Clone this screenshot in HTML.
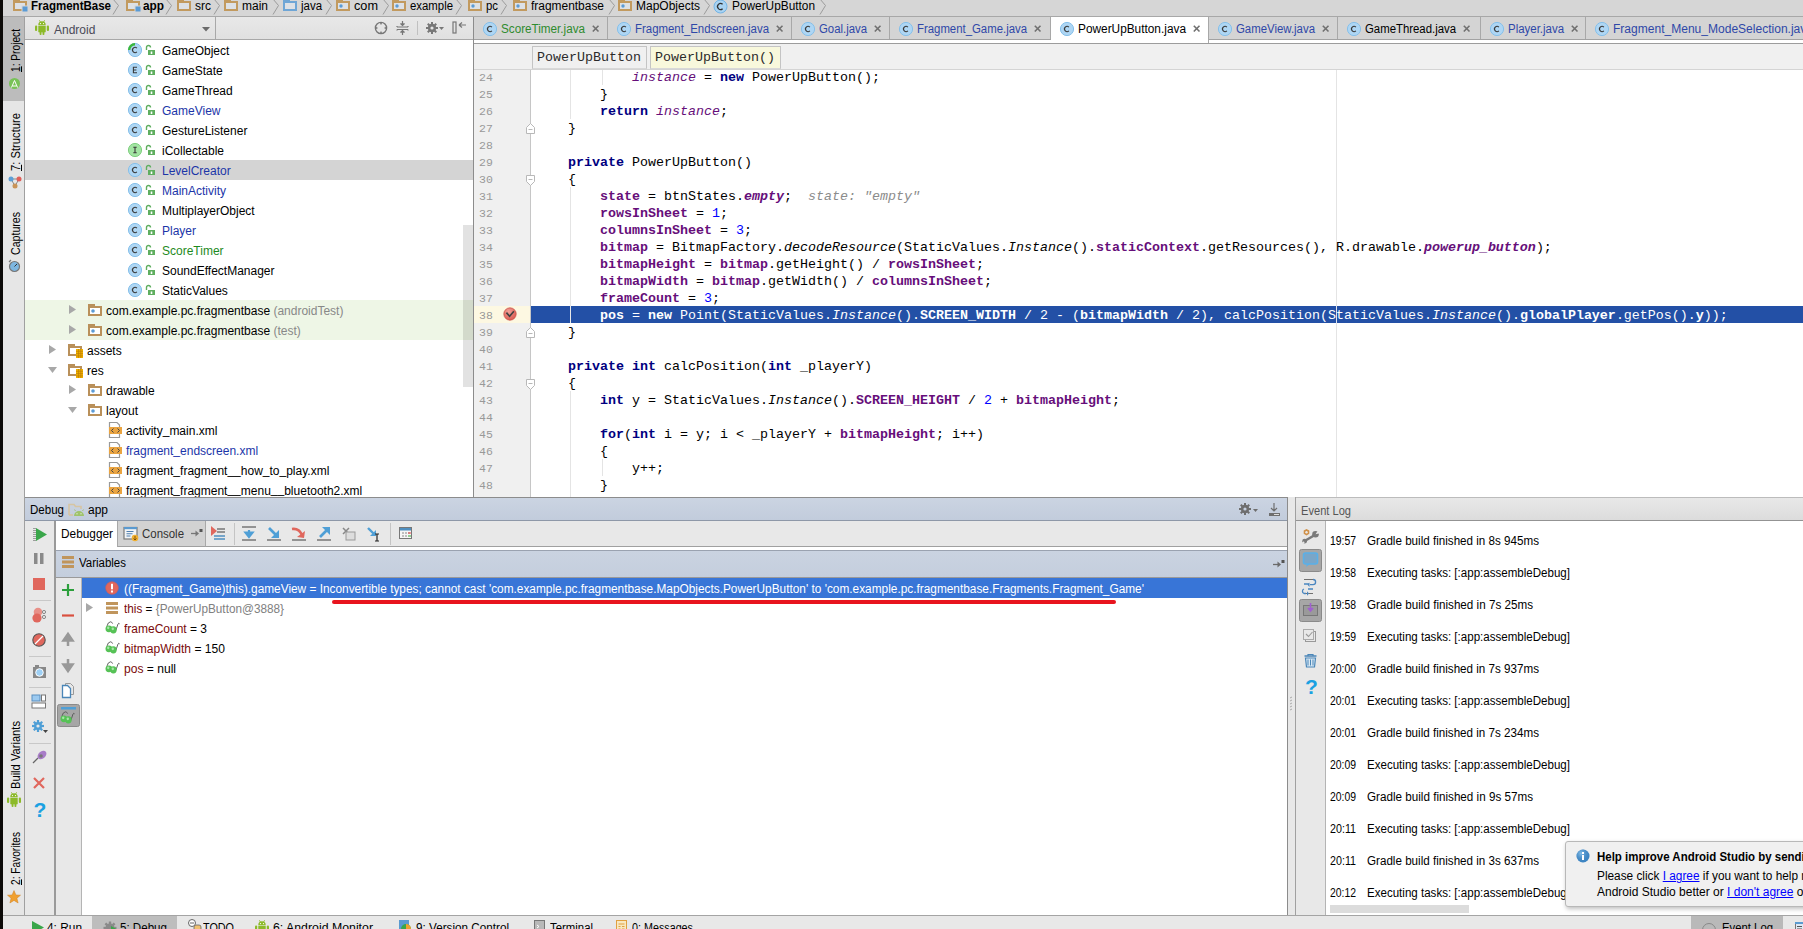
<!DOCTYPE html><html><head><meta charset="utf-8"><style>*{margin:0;padding:0;box-sizing:border-box}
html,body{width:1803px;height:929px;overflow:hidden;background:#e8e8e8;font-family:"Liberation Sans",sans-serif;font-size:12px;color:#000;position:relative}
.a{position:absolute}
.nw{white-space:nowrap}
svg.a{overflow:visible}
#bc{left:3px;top:0;width:1800px;height:17px;background:#d6d6d6;border-bottom:1px solid #a8a8a8}
#ls{left:3px;top:17px;width:22px;height:898px;background:#e6e6e6;border-right:1px solid #a0a0a0}
.vt{position:absolute;transform:rotate(-90deg);transform-origin:0 0;white-space:nowrap;font-size:12px}
#proj{left:25px;top:17px;width:448px;height:480px;background:#fff}
#projh{left:0;top:0;width:448px;height:23px;background:linear-gradient(#e8e8e8,#e0e0e0);border-bottom:1px solid #a8a8a8}
.row{position:absolute;height:20px;line-height:20px;white-space:nowrap}
#ed{left:473px;top:17px;width:1330px;height:480px;background:#fff;border-left:1px solid #8c8c8c}
#tabs{left:0;top:0;width:1330px;height:23px;background:#d4d4d4;border-bottom:1px solid #a0a0a0}
.tab{position:absolute;top:0;height:23px;border-right:1px solid #a6a6a6;line-height:22px;white-space:nowrap;color:#2040a0}
#nav{left:0;top:26px;width:1330px;height:27px;background:#f0f0f0;border-top:1px solid #a0a0a0;border-bottom:1px solid #d8d8d8}
#gut{left:0;top:53px;width:57px;height:427px;background:#f0f0f0;border-right:1px solid #c8c8c8}
.ln{position:absolute;color:#999;font-family:"Liberation Mono",monospace;font-size:11.5px;line-height:17px;white-space:pre}
.cl{position:absolute;height:17px;line-height:17px;white-space:pre;font-family:"Liberation Mono",monospace;font-size:13.333px;color:#000}
.k{color:#000080;font-weight:bold}
.f{color:#660e7a;font-weight:bold}
.s{color:#660e7a;font-style:italic}
.sb{color:#660e7a;font-weight:bold;font-style:italic}
.n{color:#0000ff}
.it{font-style:italic}
#dbg{left:25px;top:497px;width:1263px;height:416px;background:#fff}
#dbgh{left:0;top:0;width:1263px;height:24px;background:linear-gradient(#cdd5e2,#c3cddd);border-top:1px solid #8f8f8f;border-bottom:1px solid #8f99a8}
#ev{left:1295px;top:497px;width:508px;height:416px;background:#fff;border-left:1px solid #a0a0a0}
#evh{left:0;top:0;width:508px;height:24px;background:linear-gradient(#e8e8e8,#e0e0e0);border-top:1px solid #a0a0a0;border-bottom:1px solid #a0a0a0}
#bot{left:3px;top:913px;width:1800px;height:16px;background:#e6e6e6;border-top:1px solid #a8a8a8}
.mono{font-family:"Liberation Mono",monospace;font-size:13.333px}
.hint{color:#8c8c8c;font-style:italic}
#code b{font-weight:bold}
</style></head><body>
<svg width="0" height="0" style="position:absolute"><defs>
<symbol id="i-fold" overflow="visible"><path d="M0,-1H7V1H14V11H0Z" fill="#c29a5f"/><rect x="2" y="3" width="10" height="6" fill="#dde1e6"/></symbol>
<symbol id="i-jfold" overflow="visible"><path d="M0,-1H7V1H14V11H0Z" fill="#6fa6d6"/><rect x="2" y="3" width="10" height="6" fill="#dde1e6"/></symbol>
<symbol id="i-pkg" overflow="visible"><path d="M0,-1H7V1H14V11H0Z" fill="#c29a5f"/><rect x="2" y="3" width="10" height="6" fill="#dde1e6"/><circle cx="5" cy="6" r="1.7" fill="#5b9bd5"/></symbol>
<symbol id="i-mod" overflow="visible"><path d="M1,-1H8V1H15V11H1Z" fill="#c29a5f"/><rect x="3" y="3" width="10" height="6" fill="#dde1e6"/><rect x="10" y="6" width="6" height="6" fill="#5b9bd5" stroke="#d6d6d6" stroke-width="1"/></symbol>
<symbol id="i-cls" overflow="visible"><circle cx="7.5" cy="7.5" r="6.5" fill="#a9d3f2" stroke="#72b4e6" stroke-width="1"/><path d="M9.6,5.3 A3,3 0 1 0 9.6,9.7" fill="none" stroke="#333" stroke-width="1.3"/></symbol>
<symbol id="i-tc" overflow="visible"><circle cx="8" cy="8" r="6.6" fill="#aed6f4" stroke="#86c0ea" stroke-width="1"/><path d="M9.9,6.1 A2.6,2.6 0 1 0 9.9,9.9" fill="none" stroke="#3a3a3a" stroke-width="1.15"/></symbol>
<symbol id="i-tc2" overflow="visible"><circle cx="8" cy="8" r="6.6" fill="#aed6f4" stroke="#86c0ea" stroke-width="1"/><path d="M8,8 V0.9 A7.1,7.1 0 0 0 0.9,8 Z" fill="#3cb83c"/><circle cx="8" cy="8" r="4.6" fill="#aed6f4"/><path d="M9.9,6.1 A2.6,2.6 0 1 0 9.9,9.9" fill="none" stroke="#3a3a3a" stroke-width="1.15"/></symbol>
<symbol id="i-te" overflow="visible"><circle cx="8" cy="8" r="6.6" fill="#aed6f4" stroke="#86c0ea" stroke-width="1"/><path d="M10,5.3 H6.4 V10.7 H10 M6.4,8 H9.4" fill="none" stroke="#3a3a3a" stroke-width="1.1"/></symbol>
<symbol id="i-ti" overflow="visible"><circle cx="8" cy="8" r="6.6" fill="#a2e4a2" stroke="#7fcf7f" stroke-width="1"/><path d="M6.3,5.3 H9.7 M6.3,10.7 H9.7 M8,5.3 V10.7" fill="none" stroke="#3a3a3a" stroke-width="1.1"/></symbol>
<symbol id="i-lock" overflow="visible"><path d="M1.5,5 V2.5 A2,2 0 0 1 5.5,2.5" fill="none" stroke="#5fae5f" stroke-width="1.4"/><rect x="3" y="5" width="7" height="5" fill="#5fae5f"/><rect x="5.7" y="6.5" width="1.6" height="2.5" fill="#fff"/></symbol>
<symbol id="i-pkgt" overflow="visible"><path d="M0,0H7V2H14V12H0Z" fill="#b9905a"/><rect x="2" y="4" width="10" height="6" fill="#fff"/><circle cx="5" cy="7" r="1.8" fill="#5b9bd5"/></symbol>
<symbol id="i-resf" overflow="visible"><path d="M0,0H7V2H14V12H0Z" fill="#b9905a"/><rect x="2" y="4" width="10" height="6" fill="#fff"/><rect x="8" y="5" width="7" height="9" fill="#f0b000"/><path d="M8,7.3h7M8,9.6h7M8,11.9h7M10.5,5v9M12.8,5v9" stroke="#c08000" stroke-width="0.7"/></symbol>
<symbol id="i-xml" overflow="visible"><path d="M1.5,0.5 H9 L11.5,3 V15.5 H1.5 Z" fill="#fff" stroke="#999" stroke-width="1.2"/><rect x="1" y="5" width="13" height="7" fill="#eaa441"/><path d="M5.5,6.5 L3.5,8.5 L5.5,10.5 M9.5,6.5 L11.5,8.5 L9.5,10.5" fill="none" stroke="#444" stroke-width="1"/></symbol>
<symbol id="i-android" overflow="visible"><g fill="#8cba28"><rect x="0" y="5.5" width="2.2" height="5.5" rx="1"/><rect x="3.3" y="5.6" width="7.4" height="6.6"/><rect x="11.8" y="5.5" width="2.2" height="5.5" rx="1"/><path d="M3.3,5 A3.7,3.7 0 0 1 10.7,5 Z"/><rect x="4.6" y="11.5" width="1.9" height="3.5" rx="0.8"/><rect x="7.5" y="11.5" width="1.9" height="3.5" rx="0.8"/></g><path d="M4.4,0.3 L5.5,2.2 M9.6,0.3 L8.5,2.2" stroke="#8cba28" stroke-width="0.9"/><circle cx="5.5" cy="3.6" r="0.6" fill="#fff"/><circle cx="8.5" cy="3.6" r="0.6" fill="#fff"/></symbol>
<radialGradient id="g-info" cx="0.35" cy="0.3" r="0.8"><stop offset="0" stop-color="#8cc4ec" stop-opacity="0.9"/><stop offset="1" stop-color="#2a70b0" stop-opacity="0"/></radialGradient>
<symbol id="i-glasses" overflow="visible"><path d="M1.8,5.5 Q3,0.8 5.5,0.8 Q7,0.9 7.6,2.6 M10.8,9.5 L13,3 Q13.7,1.6 14.6,2.8" stroke="#555" stroke-width="0.9" fill="none"/><ellipse cx="3.9" cy="7.8" rx="3.4" ry="3.4" fill="#56c256"/><ellipse cx="8.4" cy="8.8" rx="3.3" ry="3.6" fill="#56c256"/><ellipse cx="3.2" cy="6.8" rx="1.2" ry="1.4" fill="#a8e6a8"/><ellipse cx="7.8" cy="7.8" rx="1.2" ry="1.4" fill="#a8e6a8"/></symbol>
</defs></svg>

<div class="a" style="left:0;top:0;width:3px;height:929px;background:#0c0a08"></div>
<div id="bc" class="a"></div>
<svg class="a" style="left:12px;top:0" width="16" height="13"><use href="#i-mod"/></svg>
<div class="a nw" style="left:31px;top:-2px;line-height:16px;font-weight:bold;transform-origin:0 0;transform:scaleX(0.9595)">FragmentBase</div>
<svg class="a" style="left:112px;top:0" width="10" height="17"><path d="M1,-1 L6.5,5.5 L1,14.5" fill="none" stroke="#9c9c9c" stroke-width="1"/></svg>
<svg class="a" style="left:125px;top:0" width="16" height="13"><use href="#i-mod"/></svg>
<div class="a nw" style="left:143px;top:-2px;line-height:16px;font-weight:bold;transform-origin:0 0;transform:scaleX(0.9839)">app</div>
<svg class="a" style="left:165px;top:0" width="10" height="17"><path d="M1,-1 L6.5,5.5 L1,14.5" fill="none" stroke="#9c9c9c" stroke-width="1"/></svg>
<svg class="a" style="left:177px;top:0" width="16" height="13"><use href="#i-fold"/></svg>
<div class="a nw" style="left:195px;top:-2px;line-height:16px;transform-origin:0 0;transform:scaleX(1.0000)">src</div>
<svg class="a" style="left:213px;top:0" width="10" height="17"><path d="M1,-1 L6.5,5.5 L1,14.5" fill="none" stroke="#9c9c9c" stroke-width="1"/></svg>
<svg class="a" style="left:224px;top:0" width="16" height="13"><use href="#i-fold"/></svg>
<div class="a nw" style="left:242px;top:-2px;line-height:16px;transform-origin:0 0;transform:scaleX(0.9994)">main</div>
<svg class="a" style="left:272px;top:0" width="10" height="17"><path d="M1,-1 L6.5,5.5 L1,14.5" fill="none" stroke="#9c9c9c" stroke-width="1"/></svg>
<svg class="a" style="left:283px;top:0" width="16" height="13"><use href="#i-jfold"/></svg>
<div class="a nw" style="left:301px;top:-2px;line-height:16px;transform-origin:0 0;transform:scaleX(0.9539)">java</div>
<svg class="a" style="left:325px;top:0" width="10" height="17"><path d="M1,-1 L6.5,5.5 L1,14.5" fill="none" stroke="#9c9c9c" stroke-width="1"/></svg>
<svg class="a" style="left:336px;top:0" width="16" height="13"><use href="#i-pkg"/></svg>
<div class="a nw" style="left:354px;top:-2px;line-height:16px;transform-origin:0 0;transform:scaleX(1.0586)">com</div>
<svg class="a" style="left:382px;top:0" width="10" height="17"><path d="M1,-1 L6.5,5.5 L1,14.5" fill="none" stroke="#9c9c9c" stroke-width="1"/></svg>
<svg class="a" style="left:392px;top:0" width="16" height="13"><use href="#i-pkg"/></svg>
<div class="a nw" style="left:410px;top:-2px;line-height:16px;transform-origin:0 0;transform:scaleX(0.9480)">example</div>
<svg class="a" style="left:455px;top:0" width="10" height="17"><path d="M1,-1 L6.5,5.5 L1,14.5" fill="none" stroke="#9c9c9c" stroke-width="1"/></svg>
<svg class="a" style="left:468px;top:0" width="16" height="13"><use href="#i-pkg"/></svg>
<div class="a nw" style="left:486px;top:-2px;line-height:16px;transform-origin:0 0;transform:scaleX(0.9458)">pc</div>
<svg class="a" style="left:500px;top:0" width="10" height="17"><path d="M1,-1 L6.5,5.5 L1,14.5" fill="none" stroke="#9c9c9c" stroke-width="1"/></svg>
<svg class="a" style="left:513px;top:0" width="16" height="13"><use href="#i-pkg"/></svg>
<div class="a nw" style="left:531px;top:-2px;line-height:16px;transform-origin:0 0;transform:scaleX(0.9947)">fragmentbase</div>
<svg class="a" style="left:608px;top:0" width="10" height="17"><path d="M1,-1 L6.5,5.5 L1,14.5" fill="none" stroke="#9c9c9c" stroke-width="1"/></svg>
<svg class="a" style="left:618px;top:0" width="16" height="13"><use href="#i-pkg"/></svg>
<div class="a nw" style="left:636px;top:-2px;line-height:16px;transform-origin:0 0;transform:scaleX(0.9995)">MapObjects</div>
<svg class="a" style="left:703px;top:0" width="10" height="17"><path d="M1,-1 L6.5,5.5 L1,14.5" fill="none" stroke="#9c9c9c" stroke-width="1"/></svg>
<svg class="a" style="left:713px;top:-1px" width="16" height="16"><use href="#i-cls"/></svg>
<div class="a nw" style="left:732px;top:-2px;line-height:16px;transform-origin:0 0;transform:scaleX(0.9875)">PowerUpButton</div>
<svg class="a" style="left:819px;top:0" width="10" height="17"><path d="M1,-1 L6.5,5.5 L1,14.5" fill="none" stroke="#9c9c9c" stroke-width="1"/></svg>
<div id="ls" class="a"></div>
<div class="a" style="left:3px;top:17px;width:21px;height:84px;background:#bcbcbc"></div>
<div class="vt" style="left:9px;top:72px;line-height:14px;transform-origin:0 0;transform:rotate(-90deg) scaleX(0.8481)"><u>1</u>: Project</div>
<div class="vt" style="left:9px;top:171px;line-height:14px;transform-origin:0 0;transform:rotate(-90deg) scaleX(0.9348)"><u>7</u>: Structure</div>
<div class="vt" style="left:9px;top:255px;line-height:14px;transform-origin:0 0;transform:rotate(-90deg) scaleX(0.8829)">Captures</div>
<div class="vt" style="left:9px;top:789px;line-height:14px;transform-origin:0 0;transform:rotate(-90deg) scaleX(0.9295)">Build Variants</div>
<div class="vt" style="left:9px;top:885px;line-height:14px;transform-origin:0 0;transform:rotate(-90deg) scaleX(0.8453)"><u>2</u>: Favorites</div>
<svg class="a" style="left:9px;top:78px" width="12" height="12"><circle cx="5.5" cy="5.5" r="5.5" fill="#78c257"/><path d="M2.5,9.5 L5.5,2.5 L8.5,9.5 M3.5,8 h4" stroke="#fff" stroke-width="1" fill="none"/></svg>
<svg class="a" style="left:8px;top:176px" width="14" height="14"><path d="M3,3 L11,3 L7,10 Z" fill="none" stroke="#888" stroke-width="1"/><circle cx="3" cy="3" r="2.5" fill="#5d9fd6"/><circle cx="11" cy="3" r="2.5" fill="#e0605a"/><circle cx="7" cy="10" r="2.5" fill="#c99357"/></svg>
<svg class="a" style="left:8px;top:259px" width="14" height="14"><circle cx="6.5" cy="7.5" r="5" fill="#7db6e0" stroke="#777" stroke-width="1.2"/><path d="M6.5,7.5 L9,5" stroke="#333" stroke-width="1"/><path d="M1,3 L3,1" stroke="#777" stroke-width="1.2"/></svg>
<svg class="a" style="left:7px;top:792px" width="16" height="14"><use href="#i-android"/></svg>
<svg class="a" style="left:7px;top:890px" width="14" height="14"><path d="M7,0.5 L8.9,5 L13.5,5.2 L9.9,8.2 L11.1,13 L7,10.4 L2.9,13 L4.1,8.2 L0.5,5.2 L5.1,5 Z" fill="#f0a030" stroke="#d08020" stroke-width="0.5"/></svg>
<div id="proj" class="a"><div id="projh" class="a"></div></div>
<svg class="a" style="left:35px;top:20px" width="16" height="16"><use href="#i-android"/></svg>
<div class="a nw" style="left:54px;top:20px;line-height:20px;color:#4a4a58">Android</div>
<svg class="a" style="left:202px;top:27px" width="10" height="6"><path d="M0,0 H8 L4,4.5 Z" fill="#6a6a6a"/></svg>
<div class="a" style="left:215px;top:17px;width:1px;height:22px;background:#a8a8a8"></div>
<svg class="a" style="left:374px;top:21px" width="100" height="16">
<circle cx="7" cy="7" r="5.6" fill="none" stroke="#777" stroke-width="1.4"/><rect x="6.2" y="1" width="1.6" height="2.4" fill="#777"/><rect x="6.2" y="10.6" width="1.6" height="2.4" fill="#777"/><rect x="1" y="6.2" width="2.4" height="1.6" fill="#777"/><rect x="10.6" y="6.2" width="2.4" height="1.6" fill="#777"/>
<g transform="translate(23,0)" stroke="#777" stroke-width="1.2" fill="none"><path d="M0,6 h11 M0,8.5 h11 M0,5 v1 M11,5 v1 M0,8.5 v1 M11,8.5 v1 M5.5,0 v4 M5.5,10 v4"/><path d="M3.5,2.5 L5.5,4.5 L7.5,2.5 M3.5,11.5 L5.5,9.5 L7.5,11.5" fill="#777"/></g>
<rect x="43" y="0" width="1" height="14" fill="#c0c0c0"/>
<g transform="translate(58,7)"><circle r="4.2" fill="#777"/><circle r="1.6" fill="#e4e4e4"/><g fill="#777"><rect x="-1" y="-6" width="2" height="12"/><rect x="-6" y="-1" width="12" height="2"/><rect x="-1" y="-6" width="2" height="12" transform="rotate(45)"/><rect x="-1" y="-6" width="2" height="12" transform="rotate(-45)"/></g><circle r="1.6" fill="#e4e4e4"/></g>
<path d="M65,6 h5 l-2.5,3 z" fill="#777"/>
<rect x="79" y="1" width="3" height="11" fill="none" stroke="#777" stroke-width="1.2"/><path d="M85,4 h7 M85,4 l3,-2.5 M85,4 l3,2.5" stroke="#777" stroke-width="1.2" fill="none"/>
</svg>
<div class="a" style="left:25px;top:160px;width:448px;height:20px;background:#d4d4d4"></div>
<div class="a" style="left:25px;top:300px;width:448px;height:40px;background:#eef6e6"></div>
<div class="a" style="left:463px;top:225px;width:10px;height:162px;background:rgba(0,0,0,0.115)"></div>
<svg class="a" style="left:127px;top:42px" width="16" height="16"><use href="#i-tc2"/></svg>
<svg class="a" style="left:145px;top:45px" width="12" height="11"><use href="#i-lock"/></svg>
<div class="row" style="left:162px;top:41px;color:#000">GameObject</div>
<svg class="a" style="left:127px;top:62px" width="16" height="16"><use href="#i-te"/></svg>
<svg class="a" style="left:145px;top:65px" width="12" height="11"><use href="#i-lock"/></svg>
<div class="row" style="left:162px;top:61px;color:#000">GameState</div>
<svg class="a" style="left:127px;top:82px" width="16" height="16"><use href="#i-tc"/></svg>
<svg class="a" style="left:145px;top:85px" width="12" height="11"><use href="#i-lock"/></svg>
<div class="row" style="left:162px;top:81px;color:#000">GameThread</div>
<svg class="a" style="left:127px;top:102px" width="16" height="16"><use href="#i-tc"/></svg>
<svg class="a" style="left:145px;top:105px" width="12" height="11"><use href="#i-lock"/></svg>
<div class="row" style="left:162px;top:101px;color:#1b35a8">GameView</div>
<svg class="a" style="left:127px;top:122px" width="16" height="16"><use href="#i-tc"/></svg>
<svg class="a" style="left:145px;top:125px" width="12" height="11"><use href="#i-lock"/></svg>
<div class="row" style="left:162px;top:121px;color:#000">GestureListener</div>
<svg class="a" style="left:127px;top:142px" width="16" height="16"><use href="#i-ti"/></svg>
<svg class="a" style="left:145px;top:145px" width="12" height="11"><use href="#i-lock"/></svg>
<div class="row" style="left:162px;top:141px;color:#000">iCollectable</div>
<svg class="a" style="left:127px;top:162px" width="16" height="16"><use href="#i-tc"/></svg>
<svg class="a" style="left:145px;top:165px" width="12" height="11"><use href="#i-lock"/></svg>
<div class="row" style="left:162px;top:161px;color:#1b35a8">LevelCreator</div>
<svg class="a" style="left:127px;top:182px" width="16" height="16"><use href="#i-tc"/></svg>
<svg class="a" style="left:145px;top:185px" width="12" height="11"><use href="#i-lock"/></svg>
<div class="row" style="left:162px;top:181px;color:#1b35a8">MainActivity</div>
<svg class="a" style="left:127px;top:202px" width="16" height="16"><use href="#i-tc"/></svg>
<svg class="a" style="left:145px;top:205px" width="12" height="11"><use href="#i-lock"/></svg>
<div class="row" style="left:162px;top:201px;color:#000">MultiplayerObject</div>
<svg class="a" style="left:127px;top:222px" width="16" height="16"><use href="#i-tc"/></svg>
<svg class="a" style="left:145px;top:225px" width="12" height="11"><use href="#i-lock"/></svg>
<div class="row" style="left:162px;top:221px;color:#1b35a8">Player</div>
<svg class="a" style="left:127px;top:242px" width="16" height="16"><use href="#i-tc"/></svg>
<svg class="a" style="left:145px;top:245px" width="12" height="11"><use href="#i-lock"/></svg>
<div class="row" style="left:162px;top:241px;color:#1e8a1e">ScoreTimer</div>
<svg class="a" style="left:127px;top:262px" width="16" height="16"><use href="#i-tc"/></svg>
<svg class="a" style="left:145px;top:265px" width="12" height="11"><use href="#i-lock"/></svg>
<div class="row" style="left:162px;top:261px;color:#000">SoundEffectManager</div>
<svg class="a" style="left:127px;top:282px" width="16" height="16"><use href="#i-tc"/></svg>
<svg class="a" style="left:145px;top:285px" width="12" height="11"><use href="#i-lock"/></svg>
<div class="row" style="left:162px;top:281px;color:#000">StaticValues</div>
<svg class="a" style="left:69px;top:305px" width="10" height="10"><path d="M0,0 V9 L7,4.5 Z" fill="#a8a8a8"/></svg>
<svg class="a" style="left:88px;top:304px" width="16" height="14"><use href="#i-pkgt"/></svg>
<div class="row" style="left:106px;top:301px">com.example.pc.fragmentbase <span style="color:#888">(androidTest)</span></div>
<svg class="a" style="left:69px;top:325px" width="10" height="10"><path d="M0,0 V9 L7,4.5 Z" fill="#a8a8a8"/></svg>
<svg class="a" style="left:88px;top:324px" width="16" height="14"><use href="#i-pkgt"/></svg>
<div class="row" style="left:106px;top:321px">com.example.pc.fragmentbase <span style="color:#888">(test)</span></div>
<svg class="a" style="left:49px;top:345px" width="10" height="10"><path d="M0,0 V9 L7,4.5 Z" fill="#a8a8a8"/></svg>
<svg class="a" style="left:68px;top:344px" width="16" height="14"><use href="#i-resf"/></svg>
<div class="row" style="left:87px;top:341px">assets</div>
<svg class="a" style="left:48px;top:366px" width="10" height="10"><path d="M0,1 H9 L4.5,7 Z" fill="#a8a8a8"/></svg>
<svg class="a" style="left:68px;top:364px" width="16" height="14"><use href="#i-resf"/></svg>
<div class="row" style="left:87px;top:361px">res</div>
<svg class="a" style="left:69px;top:385px" width="10" height="10"><path d="M0,0 V9 L7,4.5 Z" fill="#a8a8a8"/></svg>
<svg class="a" style="left:88px;top:384px" width="16" height="14"><use href="#i-pkgt"/></svg>
<div class="row" style="left:106px;top:381px">drawable</div>
<svg class="a" style="left:68px;top:406px" width="10" height="10"><path d="M0,1 H9 L4.5,7 Z" fill="#a8a8a8"/></svg>
<svg class="a" style="left:88px;top:404px" width="16" height="14"><use href="#i-pkgt"/></svg>
<div class="row" style="left:106px;top:401px">layout</div>
<svg class="a" style="left:108px;top:422px" width="16" height="16"><use href="#i-xml"/></svg>
<div class="row" style="left:126px;top:421px;color:#000">activity<span style="position:relative;top:-1px">_</span>main.xml</div>
<svg class="a" style="left:108px;top:442px" width="16" height="16"><use href="#i-xml"/></svg>
<div class="row" style="left:126px;top:441px;color:#1b35a8">fragment<span style="position:relative;top:-1px">_</span>endscreen.xml</div>
<svg class="a" style="left:108px;top:462px" width="16" height="16"><use href="#i-xml"/></svg>
<div class="row" style="left:126px;top:461px;color:#000">fragment<span style="position:relative;top:-1px">_</span>fragment<span style="position:relative;top:-1px">_</span><span style="position:relative;top:-1px">_</span>how<span style="position:relative;top:-1px">_</span>to<span style="position:relative;top:-1px">_</span>play.xml</div>
<svg class="a" style="left:108px;top:482px" width="16" height="16"><use href="#i-xml"/></svg>
<div class="row" style="left:126px;top:481px;color:#000">fragment<span style="position:relative;top:-2px">_</span>fragment<span style="position:relative;top:-2px">_</span><span style="position:relative;top:-2px">_</span>menu<span style="position:relative;top:-2px">_</span><span style="position:relative;top:-2px">_</span>bluetooth2.xml</div>
<div class="a" style="left:25px;top:497px;width:448px;height:1px;background:#8f8f8f"></div>
<div class="a" style="left:473px;top:17px;width:1px;height:480px;background:#8c8c8c"></div>
<div class="a" style="left:474px;top:17px;width:1329px;height:23px;background:#d4d4d4"></div>
<div class="a" style="left:474px;top:39px;width:1329px;height:1px;background:#a2a2a2"></div>
<div class="a" style="left:474px;top:40px;width:1329px;height:3px;background:#fff"></div>
<div class="a" style="left:474px;top:43px;width:1329px;height:1px;background:#9c9c9c"></div>
<div class="a" style="left:607px;top:17px;width:1px;height:22px;background:#a8a8a8"></div>
<svg class="a" style="left:482px;top:21px" width="16" height="16"><use href="#i-tc"/></svg>
<div class="a nw" style="left:501px;top:20px;line-height:18px;color:#2e8b2e;transform-origin:0 0;transform:scaleX(0.9739)">ScoreTimer.java</div>
<svg class="a" style="left:592px;top:25px" width="8" height="8"><path d="M0.8,0.8 L6.5,6.5 M6.5,0.8 L0.8,6.5" stroke="#707070" stroke-width="1.6"/></svg>
<div class="a" style="left:791px;top:17px;width:1px;height:22px;background:#a8a8a8"></div>
<svg class="a" style="left:616px;top:21px" width="16" height="16"><use href="#i-tc"/></svg>
<div class="a nw" style="left:635px;top:20px;line-height:18px;color:#2f48a8;transform-origin:0 0;transform:scaleX(0.9520)">Fragment_Endscreen.java</div>
<svg class="a" style="left:776px;top:25px" width="8" height="8"><path d="M0.8,0.8 L6.5,6.5 M6.5,0.8 L0.8,6.5" stroke="#707070" stroke-width="1.6"/></svg>
<div class="a" style="left:889px;top:17px;width:1px;height:22px;background:#a8a8a8"></div>
<svg class="a" style="left:800px;top:21px" width="16" height="16"><use href="#i-tc"/></svg>
<div class="a nw" style="left:819px;top:20px;line-height:18px;color:#2f48a8;transform-origin:0 0;transform:scaleX(0.9467)">Goal.java</div>
<svg class="a" style="left:874px;top:25px" width="8" height="8"><path d="M0.8,0.8 L6.5,6.5 M6.5,0.8 L0.8,6.5" stroke="#707070" stroke-width="1.6"/></svg>
<div class="a" style="left:1050px;top:17px;width:1px;height:22px;background:#a8a8a8"></div>
<svg class="a" style="left:898px;top:21px" width="16" height="16"><use href="#i-tc"/></svg>
<div class="a nw" style="left:917px;top:20px;line-height:18px;color:#2f48a8;transform-origin:0 0;transform:scaleX(0.9478)">Fragment_Game.java</div>
<svg class="a" style="left:1034px;top:25px" width="8" height="8"><path d="M0.8,0.8 L6.5,6.5 M6.5,0.8 L0.8,6.5" stroke="#707070" stroke-width="1.6"/></svg>
<div class="a" style="left:1051px;top:17px;width:157px;height:26px;background:#fff"></div>
<div class="a" style="left:1208px;top:17px;width:1px;height:26px;background:#a8a8a8"></div>
<svg class="a" style="left:1059px;top:21px" width="16" height="16"><use href="#i-tc"/></svg>
<div class="a nw" style="left:1078px;top:20px;line-height:18px;color:#000;transform-origin:0 0;transform:scaleX(0.9871)">PowerUpButton.java</div>
<svg class="a" style="left:1193px;top:25px" width="8" height="8"><path d="M0.8,0.8 L6.5,6.5 M6.5,0.8 L0.8,6.5" stroke="#707070" stroke-width="1.6"/></svg>
<div class="a" style="left:1337px;top:17px;width:1px;height:22px;background:#a8a8a8"></div>
<svg class="a" style="left:1217px;top:21px" width="16" height="16"><use href="#i-tc"/></svg>
<div class="a nw" style="left:1236px;top:20px;line-height:18px;color:#2f48a8;transform-origin:0 0;transform:scaleX(0.9500)">GameView.java</div>
<svg class="a" style="left:1322px;top:25px" width="8" height="8"><path d="M0.8,0.8 L6.5,6.5 M6.5,0.8 L0.8,6.5" stroke="#707070" stroke-width="1.6"/></svg>
<div class="a" style="left:1480px;top:17px;width:1px;height:22px;background:#a8a8a8"></div>
<svg class="a" style="left:1346px;top:21px" width="16" height="16"><use href="#i-tc"/></svg>
<div class="a nw" style="left:1365px;top:20px;line-height:18px;color:#000;transform-origin:0 0;transform:scaleX(0.9475)">GameThread.java</div>
<svg class="a" style="left:1463px;top:25px" width="8" height="8"><path d="M0.8,0.8 L6.5,6.5 M6.5,0.8 L0.8,6.5" stroke="#707070" stroke-width="1.6"/></svg>
<div class="a" style="left:1585px;top:17px;width:1px;height:22px;background:#a8a8a8"></div>
<svg class="a" style="left:1489px;top:21px" width="16" height="16"><use href="#i-tc"/></svg>
<div class="a nw" style="left:1508px;top:20px;line-height:18px;color:#2f48a8;transform-origin:0 0;transform:scaleX(0.9540)">Player.java</div>
<svg class="a" style="left:1571px;top:25px" width="8" height="8"><path d="M0.8,0.8 L6.5,6.5 M6.5,0.8 L0.8,6.5" stroke="#707070" stroke-width="1.6"/></svg>
<svg class="a" style="left:1594px;top:21px" width="16" height="16"><use href="#i-tc"/></svg>
<div class="a nw" style="left:1613px;top:20px;line-height:18px;color:#2f48a8;transform-origin:0 0;transform:scaleX(1.0027)">Fragment_Menu_ModeSelection.java</div>
<div class="a" style="left:474px;top:44px;width:1329px;height:25px;background:#f0f0f0"></div>
<div class="a" style="left:474px;top:69px;width:1329px;height:1px;background:#d4d4d4"></div>
<div class="a" style="left:532px;top:46px;width:115px;height:23px;background:#f0f0f0;border:1px solid #c4c4c4;border-bottom-color:#d8d8d8"></div>
<div class="a" style="left:650px;top:46px;width:131px;height:23px;background:#f8f8dc;border:1px solid #c4c4c4;border-bottom-color:#d8d8d8"></div>
<div class="a nw mono" style="left:537px;top:49px;line-height:18px;color:#2a2a2a">PowerUpButton</div>
<div class="a nw mono" style="left:655px;top:49px;line-height:18px;color:#2a2a2a">PowerUpButton()</div>
<div class="a" style="left:474px;top:70px;width:1329px;height:427px;background:#fff;overflow:hidden" id="code">
<div class="a" style="left:0;top:0;width:56px;height:427px;background:#f0f0f0"></div>
<div class="a" style="left:56px;top:0;width:1px;height:427px;background:#c6c6c6"></div>
<div class="a" style="left:862px;top:0;width:1px;height:427px;background:#e4e4e4"></div>
<div class="a" style="left:0;top:236px;width:56px;height:17px;background:#fdf8e2"></div>
<div class="a" style="left:57px;top:236px;width:1272px;height:17px;background:#2350a6"></div>
<div class="a" style="left:96px;top:-19px;width:1px;height:68px;background:#e4e4e4"></div>
<div class="a" style="left:128px;top:-19px;width:1px;height:34px;background:#e4e4e4"></div>
<div class="a" style="left:96px;top:117px;width:1px;height:136px;background:#e4e4e4"></div>
<div class="a" style="left:96px;top:321px;width:1px;height:119px;background:#e4e4e4"></div>
<div class="a" style="left:128px;top:389px;width:1px;height:17px;background:#e4e4e4"></div>
<div class="a" style="left:96px;top:236px;width:1px;height:17px;background:#e8e8e8"></div>
<div class="a" style="left:862px;top:236px;width:1px;height:17px;background:#dfe4ee"></div>
<div class="ln" style="left:5px;top:-1px">24</div>
<div class="cl" style="left:62px;top:-1px">            <span class="s">instance</span> = <span class="k">new</span> PowerUpButton();</div>
<div class="ln" style="left:5px;top:16px">25</div>
<div class="cl" style="left:62px;top:16px">        }</div>
<div class="ln" style="left:5px;top:33px">26</div>
<div class="cl" style="left:62px;top:33px">        <span class="k">return</span> <span class="s">instance</span>;</div>
<div class="ln" style="left:5px;top:50px">27</div>
<div class="cl" style="left:62px;top:50px">    }</div>
<div class="ln" style="left:5px;top:67px">28</div>
<div class="ln" style="left:5px;top:84px">29</div>
<div class="cl" style="left:62px;top:84px">    <span class="k">private</span> PowerUpButton()</div>
<div class="ln" style="left:5px;top:101px">30</div>
<div class="cl" style="left:62px;top:101px">    {</div>
<div class="ln" style="left:5px;top:118px">31</div>
<div class="cl" style="left:62px;top:118px">        <span class="f">state</span> = btnStates.<span class="sb">empty</span>;  <span class="hint">state: "empty"</span></div>
<div class="ln" style="left:5px;top:135px">32</div>
<div class="cl" style="left:62px;top:135px">        <span class="f">rowsInSheet</span> = <span class="n">1</span>;</div>
<div class="ln" style="left:5px;top:152px">33</div>
<div class="cl" style="left:62px;top:152px">        <span class="f">columnsInSheet</span> = <span class="n">3</span>;</div>
<div class="ln" style="left:5px;top:169px">34</div>
<div class="cl" style="left:62px;top:169px">        <span class="f">bitmap</span> = BitmapFactory.<span class="it">decodeResource</span>(StaticValues.<span class="it">Instance</span>().<span class="f">staticContext</span>.getResources(), R.drawable.<span class="sb">powerup_button</span>);</div>
<div class="ln" style="left:5px;top:186px">35</div>
<div class="cl" style="left:62px;top:186px">        <span class="f">bitmapHeight</span> = <span class="f">bitmap</span>.getHeight() / <span class="f">rowsInSheet</span>;</div>
<div class="ln" style="left:5px;top:203px">36</div>
<div class="cl" style="left:62px;top:203px">        <span class="f">bitmapWidth</span> = <span class="f">bitmap</span>.getWidth() / <span class="f">columnsInSheet</span>;</div>
<div class="ln" style="left:5px;top:220px">37</div>
<div class="cl" style="left:62px;top:220px">        <span class="f">frameCount</span> = <span class="n">3</span>;</div>
<div class="ln" style="left:5px;top:237px">38</div>
<div class="cl" style="left:62px;top:237px;color:#fff">        <b>pos</b> = <b>new</b> Point(StaticValues.<i>Instance</i>().<b>SCREEN_WIDTH</b> / 2 - (<b>bitmapWidth</b> / 2), calcPosition(StaticValues.<i>Instance</i>().<b>globalPlayer</b>.getPos().<b>y</b>));</div>
<div class="ln" style="left:5px;top:254px">39</div>
<div class="cl" style="left:62px;top:254px">    }</div>
<div class="ln" style="left:5px;top:271px">40</div>
<div class="ln" style="left:5px;top:288px">41</div>
<div class="cl" style="left:62px;top:288px">    <span class="k">private int</span> calcPosition(<span class="k">int</span> _playerY)</div>
<div class="ln" style="left:5px;top:305px">42</div>
<div class="cl" style="left:62px;top:305px">    {</div>
<div class="ln" style="left:5px;top:322px">43</div>
<div class="cl" style="left:62px;top:322px">        <span class="k">int</span> y = StaticValues.<span class="it">Instance</span>().<span class="f">SCREEN_HEIGHT</span> / <span class="n">2</span> + <span class="f">bitmapHeight</span>;</div>
<div class="ln" style="left:5px;top:339px">44</div>
<div class="ln" style="left:5px;top:356px">45</div>
<div class="cl" style="left:62px;top:356px">        <span class="k">for</span>(<span class="k">int</span> i = y; i &lt; _playerY + <span class="f">bitmapHeight</span>; i++)</div>
<div class="ln" style="left:5px;top:373px">46</div>
<div class="cl" style="left:62px;top:373px">        {</div>
<div class="ln" style="left:5px;top:390px">47</div>
<div class="cl" style="left:62px;top:390px">            y++;</div>
<div class="ln" style="left:5px;top:407px">48</div>
<div class="cl" style="left:62px;top:407px">        }</div>
<div class="ln" style="left:5px;top:424px">49</div>
<div class="cl" style="left:62px;top:424px">    }</div>
<svg class="a" style="left:52px;top:53px" width="10" height="12"><path d="M0.5,10.5 V4.5 L4.5,0.5 L8.5,4.5 V10.5 Z" fill="#fff" stroke="#b8b8b8" stroke-width="1"/><path d="M2.5,6.5 h4" stroke="#b8b8b8"/></svg>
<svg class="a" style="left:52px;top:105px" width="10" height="12"><path d="M0.5,0.5 V6.5 L4.5,10.5 L8.5,6.5 V0.5 Z" fill="#fff" stroke="#b8b8b8" stroke-width="1"/><path d="M2.5,4.5 h4" stroke="#b8b8b8"/></svg>
<svg class="a" style="left:52px;top:257px" width="10" height="12"><path d="M0.5,10.5 V4.5 L4.5,0.5 L8.5,4.5 V10.5 Z" fill="#fff" stroke="#b8b8b8" stroke-width="1"/><path d="M2.5,6.5 h4" stroke="#b8b8b8"/></svg>
<svg class="a" style="left:52px;top:309px" width="10" height="12"><path d="M0.5,0.5 V6.5 L4.5,10.5 L8.5,6.5 V0.5 Z" fill="#fff" stroke="#b8b8b8" stroke-width="1"/><path d="M2.5,4.5 h4" stroke="#b8b8b8"/></svg>
<svg class="a" style="left:29px;top:237px" width="14" height="14"><defs><radialGradient id="g-bp" cx="0.4" cy="0.3" r="0.75"><stop offset="0" stop-color="#f2a098"/><stop offset="1" stop-color="#d9564c"/></radialGradient></defs><circle cx="7" cy="7" r="6.2" fill="url(#g-bp)" stroke="#c94c44" stroke-width="0.7"/><path d="M3.4,5.6 L6.6,9.3 L10.9,4.2" fill="none" stroke="#424242" stroke-width="1.7"/></svg>
</div>
<div class="a" style="left:25px;top:497px;width:1263px;height:418px;background:#fff"></div>
<div class="a" style="left:25px;top:497px;width:1263px;height:24px;background:linear-gradient(#cbd4e2,#c2ccdc);border-top:1px solid #8c8c8c;border-bottom:1px solid #8e98a8"></div>
<div class="a nw" style="left:30px;top:503px;line-height:14px;transform-origin:0 0;transform:scaleX(0.9611)">Debug</div>
<svg class="a" style="left:68px;top:503px" width="18" height="14"><path d="M1,12 V1.5 H6 L7.5,3.5 H13 V6" fill="none" stroke="#d6c5a3" stroke-width="1.6"/><path d="M1,12 H5" stroke="#d6c5a3" stroke-width="1.6"/><path d="M6,13 A5,5 0 0 1 16,13 Z" fill="#9fc36a"/><path d="M7.5,8 L6.5,6.5 M14.5,8 L15.5,6.5" stroke="#9fc36a" stroke-width="0.9"/><circle cx="9" cy="10.8" r="0.7" fill="#dfe8d0"/><circle cx="13" cy="10.8" r="0.7" fill="#dfe8d0"/></svg>
<div class="a nw" style="left:88px;top:503px;line-height:14px;transform-origin:0 0;transform:scaleX(0.9984)">app</div>
<svg class="a" style="left:1238px;top:502px" width="50" height="16">
<g transform="translate(7,7)"><circle r="4.2" fill="#6e6e6e"/><g fill="#6e6e6e"><rect x="-1" y="-6" width="2" height="12"/><rect x="-6" y="-1" width="12" height="2"/><rect x="-1" y="-6" width="2" height="12" transform="rotate(45)"/><rect x="-1" y="-6" width="2" height="12" transform="rotate(-45)"/></g><circle r="1.6" fill="#c6d0df"/></g>
<path d="M15,7 h5 l-2.5,3 z" fill="#6e6e6e"/>
<path d="M36,1 v8 M33,6 l3,3 l3,-3" stroke="#6e6e6e" stroke-width="1.2" fill="none"/><rect x="31" y="11" width="11" height="3" fill="#6e6e6e"/><rect x="36" y="12" width="5" height="1" fill="#ddd"/>
</svg>
<div class="a" style="left:25px;top:521px;width:29px;height:394px;background:#e8e8e8"></div>
<div class="a" style="left:54px;top:521px;width:2px;height:394px;background:#9a9a9a"></div>
<div class="a" style="left:56px;top:521px;width:1232px;height:26px;background:#e8e8e8;border-bottom:1px solid #a0a0a0"></div>
<div class="a" style="left:56px;top:521px;width:61px;height:29px;background:#fff"></div>
<div class="a" style="left:117px;top:521px;width:89px;height:26px;background:#d2d2d2;border-left:1px solid #a8a8a8;border-right:1px solid #a8a8a8;border-bottom:1px solid #a0a0a0"></div>
<div class="a" style="left:56px;top:547px;width:1232px;height:3px;background:#fff"></div>
<div class="a nw" style="left:61px;top:527px;line-height:14px;transform-origin:0 0;transform:scaleX(0.9864)">Debugger</div>
<svg class="a" style="left:123px;top:526px" width="16" height="16"><rect x="1" y="1.5" width="13" height="11.5" fill="#f2f4f6" stroke="#7a7a7a" stroke-width="1.2"/><rect x="1" y="1" width="13" height="2.2" fill="#5a9ad0"/><path d="M3.5,5.5 h7 M3.5,7.8 h6 M3.5,10 h4" stroke="#4f7fb0" stroke-width="1.1"/><circle cx="12" cy="12" r="3.3" fill="#f0b030"/><path d="M12,10 v4 M10.5,12.5 l1.5,1.5 l1.5,-1.5" stroke="#7a4a00" stroke-width="0.9" fill="none"/></svg>
<div class="a nw" style="left:142px;top:527px;line-height:14px;color:#333;transform-origin:0 0;transform:scaleX(0.9539)">Console</div>
<svg class="a" style="left:191px;top:528px" width="14" height="10"><path d="M0,5.5 h5" stroke="#777" stroke-width="1.3"/><path d="M4.5,2.5 L8,5.5 L4.5,8.5 Z" fill="#777"/><rect x="8.5" y="1" width="3" height="3" fill="#555"/></svg>
<svg class="a" style="left:205px;top:521px" width="215" height="26">
<path d="M6,5 L12,10 L6,15 Z" fill="#e0675d"/><path d="M12,8 h8 M12,11 h8" stroke="#777" stroke-width="1.5"/><path d="M9,15 h11 M9,18 h11" stroke="#4f8fc0" stroke-width="1.5"/>
<rect x="29" y="2" width="1" height="22" fill="#c4c4c4"/>
<path d="M37,6 h14 M37,19 h14" stroke="#777" stroke-width="1.5"/><path d="M44,9 v5 M40.5,11.5 L44,16 L47.5,11.5 Z" stroke="#4f9fd6" stroke-width="2.2" fill="#4f9fd6"/>
<path d="M62,19 h14" stroke="#777" stroke-width="1.5"/><path d="M64,7 L72,15" stroke="#4f9fd6" stroke-width="2.6"/><path d="M74,9 V17 H66 Z" fill="#4f9fd6"/>
<path d="M87,19 h14" stroke="#777" stroke-width="1.5"/><path d="M87,8 Q94,7 97,14" stroke="#e0675d" stroke-width="2.6" fill="none"/><path d="M100,10 L99,17 L92,16 Z" fill="#e0675d"/>
<path d="M112,19 h14" stroke="#777" stroke-width="1.5"/><path d="M115,16 L123,8" stroke="#4f9fd6" stroke-width="2.6"/><path d="M125,6 V14 L117,6 Z" fill="#4f9fd6"/>
<path d="M138,7 L144,13 M144,7 L138,13" stroke="#888" stroke-width="1.5"/><rect x="141" y="11" width="9" height="8" fill="#ddd" stroke="#999" stroke-width="1"/>
<path d="M163,7 L169,13" stroke="#4f9fd6" stroke-width="2.4"/><path d="M171,9 V15 H165 Z" fill="#4f9fd6"/><path d="M170,13 h4 M172,13 v7 M170,20 h4" stroke="#222" stroke-width="1.2"/>
<rect x="185" y="2" width="1" height="22" fill="#c4c4c4"/>
<rect x="194.5" y="6.5" width="12" height="11" fill="#f6f6f6" stroke="#777" stroke-width="1"/><rect x="195" y="7" width="11" height="2.5" fill="#4f8fc0"/><path d="M197,12 h2 M200,12 h2 M203,12 h2 M197,15 h2 M200,15 h2" stroke="#888" stroke-width="1"/><path d="M203,15 h3" stroke="#3a3" stroke-width="1"/><path d="M203,12 h3" stroke="#e44" stroke-width="1"/>
</svg>
<svg class="a" style="left:32px;top:527px" width="16" height="16"><path d="M1,1.5 h3 M1,3.5 h3 M1,5.5 h3 M1,7.5 h3 M1,9.5 h3 M1,11.5 h3 M1,13.5 h3" stroke="#888" stroke-width="0.8"/><path d="M4,1 L15,7.5 L4,14 Z" fill="#3aa64a"/></svg>
<svg class="a" style="left:25px;top:550px" width="30" height="280">
<rect x="9" y="3" width="3.5" height="11" fill="#8a8a8a"/><rect x="15" y="3" width="3.5" height="11" fill="#8a8a8a"/>
<rect x="8" y="28" width="12" height="12" fill="#e0675d"/>
<rect x="4" y="50" width="22" height="1" fill="#c8c8c8"/>
<circle cx="13" cy="62" r="4.3" fill="#e89088"/><circle cx="12" cy="68" r="4.6" fill="#e0675d"/><circle cx="19" cy="62" r="1.6" fill="none" stroke="#888" stroke-width="1"/><circle cx="19" cy="67" r="1.6" fill="none" stroke="#888" stroke-width="1"/>
<circle cx="14" cy="90" r="6.2" fill="#e0675d" stroke="#555" stroke-width="1.1"/><path d="M10,94 L18,86" stroke="#fff" stroke-width="1.3"/>
<rect x="4" y="106" width="22" height="1" fill="#c8c8c8"/>
<rect x="8" y="117" width="13" height="11" fill="#888"/><rect x="10" y="115" width="4" height="2" fill="#888"/><circle cx="14.5" cy="122.5" r="3.8" fill="#9ed0f5" stroke="#fff" stroke-width="1"/>
<rect x="4" y="137" width="22" height="1" fill="#c8c8c8"/>
<rect x="7" y="145" width="8" height="6" fill="#9ccaf0" stroke="#5a8fc0" stroke-width="1"/><rect x="16.5" y="145" width="4" height="6" fill="#fff" stroke="#777" stroke-width="1"/><rect x="7" y="153" width="13.5" height="5" fill="#fff" stroke="#777" stroke-width="1"/>
<g transform="translate(13,176)"><circle r="4" fill="#4f9fd6"/><g fill="#4f9fd6"><rect x="-1.1" y="-6" width="2.2" height="12"/><rect x="-6" y="-1.1" width="12" height="2.2"/><rect x="-1.1" y="-6" width="2.2" height="12" transform="rotate(45)"/><rect x="-1.1" y="-6" width="2.2" height="12" transform="rotate(-45)"/></g><circle r="1.6" fill="#e8e8e8"/></g><path d="M18,180 h5 l-2.5,3 z" fill="#444"/>
<rect x="4" y="193" width="22" height="1" fill="#c8c8c8"/>
<path d="M8,213 L13,208" stroke="#666" stroke-width="1.2"/><ellipse cx="17" cy="205" rx="5" ry="3.5" transform="rotate(-40 17 205)" fill="#a87cc8"/><circle cx="16" cy="206" r="1.8" fill="#777"/>
<path d="M9,228 L19,238 M19,228 L9,238" stroke="#e0675d" stroke-width="2.2"/>
<text x="8.5" y="267" font-family="Liberation Sans" font-weight="bold" font-size="21" fill="#1ba1e2">?</text>
</svg>
<div class="a" style="left:56px;top:577px;width:25px;height:338px;background:#e8e8e8"></div>
<div class="a" style="left:81px;top:577px;width:1px;height:338px;background:#b4b4b4"></div>
<svg class="a" style="left:56px;top:577px" width="26" height="160">
<path d="M6,13 h12 M12,7 v12" stroke="#2b9f3b" stroke-width="2.2"/>
<path d="M6,38.5 h12" stroke="#d9503f" stroke-width="2.2"/>
<path d="M12,69 v-8 M7.5,63.5 L12,57 L16.5,63.5 Z" stroke="#999" stroke-width="2.5" fill="#999"/>
<path d="M12,82 v8 M7.5,87.5 L12,94 L16.5,87.5 Z" stroke="#999" stroke-width="2.5" fill="#999"/>
<path d="M9.5,106.5 h5 l3,3 v8 h-8 Z" fill="none" stroke="#999" stroke-width="1"/><path d="M6.5,108.5 h5 l3,3 v9 h-8 Z" fill="#fff" stroke="#4a86b8" stroke-width="1.3"/>
<rect x="1.5" y="127.5" width="22" height="22" rx="2" fill="#a6a6a6" stroke="#8a8a8a" stroke-width="1"/><rect x="5" y="130" width="15" height="2.5" fill="#4f9fd6"/><g transform="translate(4,134)"><use href="#i-glasses"/></g>
</svg>
<div class="a" style="left:56px;top:550px;width:1232px;height:28px;background:linear-gradient(#cad3e1,#c4cedd);border-top:1px solid #9aa2b0;border-bottom:1px solid #9a9a9a"></div>
<svg class="a" style="left:62px;top:556px" width="14" height="14"><rect x="0" y="0" width="12" height="3" fill="#c0955c"/><rect x="0" y="4.5" width="12" height="3" fill="#c0955c"/><rect x="0" y="9" width="12" height="3" fill="#c0955c"/></svg>
<div class="a nw" style="left:79px;top:556px;line-height:14px;transform-origin:0 0;transform:scaleX(0.9564)">Variables</div>
<svg class="a" style="left:1273px;top:559px" width="14" height="10"><path d="M0,5.5 h5" stroke="#6a6a6a" stroke-width="1.3"/><path d="M4.5,2.5 L8,5.5 L4.5,8.5 Z" fill="#6a6a6a"/><rect x="8.5" y="1" width="3" height="3" fill="#555"/></svg>
<div class="a" style="left:82px;top:578px;width:1206px;height:20px;background:#3875d7"></div>
<svg class="a" style="left:105px;top:581px" width="14" height="14"><circle cx="7" cy="7" r="6.3" fill="#e0675d" stroke="#d65a50" stroke-width="0.6"/><rect x="6" y="2.8" width="2" height="5.5" fill="#fff"/><rect x="6" y="9.5" width="2" height="2" fill="#fff"/></svg>
<div class="a nw" style="left:124px;top:582px;line-height:14px;color:#fff;transform-origin:0 0;transform:scaleX(0.9873)">((Fragment_Game)this).gameView = Inconvertible types; cannot cast 'com.example.pc.fragmentbase.MapObjects.PowerUpButton' to 'com.example.pc.fragmentbase.Fragments.Fragment_Game'</div>
<div class="a" style="left:332px;top:600px;width:784px;height:4px;background:#e8141e;border-radius:2px"></div>
<svg class="a" style="left:86px;top:603px" width="10" height="10"><path d="M0,0 V9 L7,4.5 Z" fill="#a8a8a8"/></svg>
<svg class="a" style="left:106px;top:602px" width="14" height="14"><rect x="0" y="0" width="12" height="3" fill="#c0955c"/><rect x="0" y="4.5" width="12" height="3" fill="#c0955c"/><rect x="0" y="9" width="12" height="3" fill="#c0955c"/></svg>
<div class="a nw" style="left:124px;top:602px;line-height:14px;color:#000;transform-origin:0 0;transform:scaleX(0.9796)"><span style="color:#7a0a0a">this</span> = <span style="color:#808080">{PowerUpButton@3888}</span></div>
<svg class="a" style="left:105px;top:621px" width="16" height="14"><use href="#i-glasses"/></svg>
<div class="a nw" style="left:124px;top:622px;line-height:14px;color:#000;transform-origin:0 0;transform:scaleX(0.9992)"><span style="color:#7a0a0a">frameCount</span> = 3</div>
<svg class="a" style="left:105px;top:641px" width="16" height="14"><use href="#i-glasses"/></svg>
<div class="a nw" style="left:124px;top:642px;line-height:14px;color:#000;transform-origin:0 0;transform:scaleX(1.0059)"><span style="color:#7a0a0a">bitmapWidth</span> = 150</div>
<svg class="a" style="left:105px;top:661px" width="16" height="14"><use href="#i-glasses"/></svg>
<div class="a nw" style="left:124px;top:662px;line-height:14px;color:#000;transform-origin:0 0;transform:scaleX(1.0054)"><span style="color:#7a0a0a">pos</span> = null</div>
<div class="a" style="left:1288px;top:497px;width:7px;height:418px;background:#e8e8e8"></div>
<div class="a" style="left:1287px;top:497px;width:1px;height:418px;background:#8c8c8c"></div>
<svg class="a" style="left:1289px;top:697px" width="5" height="16"><path d="M1,1 L3,0 M1,4 L3,3 M1,7 L3,6 M1,10 L3,9 M1,13 L3,12" stroke="#aaa" stroke-width="1"/></svg>
<div class="a" style="left:1295px;top:497px;width:1px;height:418px;background:#a0a0a0"></div>
<div class="a" style="left:1296px;top:497px;width:507px;height:418px;background:#fff"></div>
<div class="a" style="left:1296px;top:497px;width:507px;height:24px;background:linear-gradient(#e8e8e8,#dcdcdc);border-top:1px solid #bcbcbc;border-bottom:1px solid #939393"></div>
<div class="a nw" style="left:1301px;top:504px;line-height:14px;color:#555;transform-origin:0 0;transform:scaleX(0.9251)">Event Log</div>
<div class="a" style="left:1296px;top:521px;width:29px;height:394px;background:#e8e8e8"></div>
<div class="a" style="left:1325px;top:521px;width:1px;height:394px;background:#b4b4b4"></div>
<svg class="a" style="left:1296px;top:521px" width="30" height="180">
<path d="M9.5,19.5 L18,14.5" stroke="#7a7a7a" stroke-width="2.6" stroke-linecap="round"/><circle cx="19.5" cy="13.2" r="3.3" fill="#7a7a7a"/><path d="M19.5,13.2 L22.5,8.8 L24,12.2 Z" fill="#e8e8e8"/><circle cx="8.6" cy="20.2" r="2.4" fill="#7a7a7a"/><circle cx="7.4" cy="21.6" r="1.1" fill="#e8e8e8"/><path d="M10.5,8 L13.3,9.6 V12.8 L10.5,14.4 L7.7,12.8 V9.6 Z" fill="#d09048"/><circle cx="10.5" cy="11.2" r="1.2" fill="#e8e8e8"/>
<rect x="3.5" y="28.5" width="22" height="22" rx="2" fill="#a6a6a6" stroke="#8a8a8a" stroke-width="1"/><rect x="7.5" y="32" width="14" height="11" rx="2" fill="#7aa6c8" stroke="#5ab0e8" stroke-width="1.6"/><path d="M11,43 l-1,3 l4,-3" fill="#5ab0e8"/>
<path d="M8,58.5 h9 M8,72.5 h9" stroke="#707070" stroke-width="1.1"/><path d="M8,63 h5 M12,68 h5" stroke="#4a86c0" stroke-width="1.5"/><path d="M17,58.5 a2.6,2.6 0 0 1 0,5.2 h-3 M8,68 a2.4,2.4 0 0 0 0,4.5 h2" stroke="#4a86c0" stroke-width="1.3" fill="none"/><path d="M13.5,61.5 l-2,2.2 l2,2.2 Z M11,70.3 l2,2.2 l-2,2.2 Z" fill="#4a86c0"/>
<rect x="3.5" y="78.5" width="22" height="22" rx="2" fill="#a6a6a6" stroke="#8a8a8a" stroke-width="1"/><rect x="7.5" y="84.5" width="14" height="10" fill="#9a9a9a" stroke="#777" stroke-width="1"/><path d="M14.5,82 v7 M12,87 l2.5,3 l2.5,-3" stroke="#a060d0" stroke-width="1.6" fill="#a060d0"/>
<rect x="9.5" y="110.5" width="10" height="10" fill="none" stroke="#999" stroke-width="1"/><rect x="7.5" y="108.5" width="10" height="10" fill="#e8e8e8" stroke="#aaa" stroke-width="1"/><path d="M10,113 l2.5,2.5 l4,-4.5" stroke="#999" stroke-width="1.1" fill="none"/>
<path d="M8.5,135 h12" stroke="#4a86b8" stroke-width="1.5"/><path d="M12,135 v-1.5 h5 v1.5" stroke="#4a86b8" stroke-width="1.2" fill="none"/><path d="M9.5,137 h10 l-1,9 h-8 Z" fill="#d8e8f4" stroke="#4a86b8" stroke-width="1.2"/><path d="M12,138.5 v6 M14.5,138.5 v6 M17,138.5 v6" stroke="#4a86b8" stroke-width="1"/>
<text x="9" y="173" font-family="Liberation Sans" font-weight="bold" font-size="21" fill="#1ba1e2">?</text>
</svg>
<div class="a nw" style="left:1330px;top:534px;line-height:14px;transform-origin:0 0;transform:scaleX(0.8658)">19:57</div>
<div class="a nw" style="left:1367px;top:534px;line-height:14px;transform-origin:0 0;transform:scaleX(0.9694)">Gradle build finished in 8s 945ms</div>
<div class="a nw" style="left:1330px;top:566px;line-height:14px;transform-origin:0 0;transform:scaleX(0.8658)">19:58</div>
<div class="a nw" style="left:1367px;top:566px;line-height:14px;transform-origin:0 0;transform:scaleX(0.9630)">Executing tasks: [:app:assembleDebug]</div>
<div class="a nw" style="left:1330px;top:598px;line-height:14px;transform-origin:0 0;transform:scaleX(0.8658)">19:58</div>
<div class="a nw" style="left:1367px;top:598px;line-height:14px;transform-origin:0 0;transform:scaleX(0.9721)">Gradle build finished in 7s 25ms</div>
<div class="a nw" style="left:1330px;top:630px;line-height:14px;transform-origin:0 0;transform:scaleX(0.8658)">19:59</div>
<div class="a nw" style="left:1367px;top:630px;line-height:14px;transform-origin:0 0;transform:scaleX(0.9630)">Executing tasks: [:app:assembleDebug]</div>
<div class="a nw" style="left:1330px;top:662px;line-height:14px;transform-origin:0 0;transform:scaleX(0.8658)">20:00</div>
<div class="a nw" style="left:1367px;top:662px;line-height:14px;transform-origin:0 0;transform:scaleX(0.9694)">Gradle build finished in 7s 937ms</div>
<div class="a nw" style="left:1330px;top:694px;line-height:14px;transform-origin:0 0;transform:scaleX(0.8658)">20:01</div>
<div class="a nw" style="left:1367px;top:694px;line-height:14px;transform-origin:0 0;transform:scaleX(0.9630)">Executing tasks: [:app:assembleDebug]</div>
<div class="a nw" style="left:1330px;top:726px;line-height:14px;transform-origin:0 0;transform:scaleX(0.8658)">20:01</div>
<div class="a nw" style="left:1367px;top:726px;line-height:14px;transform-origin:0 0;transform:scaleX(0.9694)">Gradle build finished in 7s 234ms</div>
<div class="a nw" style="left:1330px;top:758px;line-height:14px;transform-origin:0 0;transform:scaleX(0.8658)">20:09</div>
<div class="a nw" style="left:1367px;top:758px;line-height:14px;transform-origin:0 0;transform:scaleX(0.9630)">Executing tasks: [:app:assembleDebug]</div>
<div class="a nw" style="left:1330px;top:790px;line-height:14px;transform-origin:0 0;transform:scaleX(0.8658)">20:09</div>
<div class="a nw" style="left:1367px;top:790px;line-height:14px;transform-origin:0 0;transform:scaleX(0.9721)">Gradle build finished in 9s 57ms</div>
<div class="a nw" style="left:1330px;top:822px;line-height:14px;transform-origin:0 0;transform:scaleX(0.8922)">20:11</div>
<div class="a nw" style="left:1367px;top:822px;line-height:14px;transform-origin:0 0;transform:scaleX(0.9630)">Executing tasks: [:app:assembleDebug]</div>
<div class="a nw" style="left:1330px;top:854px;line-height:14px;transform-origin:0 0;transform:scaleX(0.8922)">20:11</div>
<div class="a nw" style="left:1367px;top:854px;line-height:14px;transform-origin:0 0;transform:scaleX(0.9694)">Gradle build finished in 3s 637ms</div>
<div class="a nw" style="left:1330px;top:886px;line-height:14px;transform-origin:0 0;transform:scaleX(0.8658)">20:12</div>
<div class="a nw" style="left:1367px;top:886px;line-height:14px;transform-origin:0 0;transform:scaleX(0.9630)">Executing tasks: [:app:assembleDebug]</div>
<div class="a" style="left:1330px;top:905px;width:139px;height:8px;background:#dcdcdc"></div>
<div class="a" style="left:1565px;top:841px;width:260px;height:66px;background:#f0f0f0;border:1px solid #b8b8b8;border-radius:3px;box-shadow:1px 2px 4px rgba(0,0,0,0.25)"></div>
<svg class="a" style="left:1576px;top:849px" width="14" height="14"><circle cx="7" cy="7" r="6.5" fill="#3e86c4"/><circle cx="7" cy="7" r="6.5" fill="url(#g-info)"/><rect x="6" y="6" width="2" height="5" fill="#fff"/><rect x="6" y="3" width="2" height="2" fill="#fff"/></svg>
<div class="a nw" style="left:1597px;top:850px;line-height:14px;font-weight:bold;transform-origin:0 0;transform:scaleX(0.955);">Help improve Android Studio by sending</div>
<div class="a nw" style="left:1597px;top:869px;line-height:14px;transform-origin:0 0;transform:scaleX(0.985);">Please click <u style="color:#00f">I agree</u> if you want to help make</div>
<div class="a nw" style="left:1597px;top:885px;line-height:14px;">Android Studio better or <u style="color:#00f">I don't agree</u> otherwise</div>
<div class="a" style="left:3px;top:915px;width:1800px;height:14px;background:#e8e8e8;border-top:1px solid #a4a4a4"></div>
<div class="a" style="left:92px;top:916px;width:85px;height:13px;background:#bdbdbd"></div>
<div class="a" style="left:1691px;top:916px;width:92px;height:13px;background:#b9b9b9"></div>
<div class="a nw" style="left:47px;top:921px;line-height:14px;transform-origin:0 0;transform:scaleX(0.9898)">4: Run</div>
<div class="a nw" style="left:120px;top:921px;line-height:14px;transform-origin:0 0;transform:scaleX(0.9650)">5: Debug</div>
<div class="a nw" style="left:203px;top:921px;line-height:14px;transform-origin:0 0;transform:scaleX(0.8998)">TODO</div>
<div class="a nw" style="left:273px;top:921px;line-height:14px;transform-origin:0 0;transform:scaleX(1.0268)">6: Android Monitor</div>
<div class="a nw" style="left:416px;top:921px;line-height:14px;transform-origin:0 0;transform:scaleX(0.9749)">9: Version Control</div>
<div class="a nw" style="left:550px;top:921px;line-height:14px;transform-origin:0 0;transform:scaleX(0.9480)">Terminal</div>
<div class="a nw" style="left:632px;top:921px;line-height:14px;transform-origin:0 0;transform:scaleX(0.8964)">0: Messages</div>
<div class="a nw" style="left:1722px;top:921px;line-height:14px;transform-origin:0 0;transform:scaleX(0.9436)">Event Log</div>
<svg class="a" style="left:0;top:918px" width="1803" height="14">
<path d="M32,3 L44,9.5 L32,16 Z" fill="#3aa64a"/>
<g transform="translate(110,10)"><circle r="4.5" fill="#8a8a8a"/><g fill="#8a8a8a"><rect x="-1.2" y="-6.5" width="2.4" height="13"/><rect x="-6.5" y="-1.2" width="13" height="2.4"/><rect x="-1.2" y="-6.5" width="2.4" height="13" transform="rotate(45)"/><rect x="-1.2" y="-6.5" width="2.4" height="13" transform="rotate(-45)"/></g></g><path d="M111,8 L118,12 L111,16 Z" fill="#3aa64a"/>
<circle cx="192" cy="5" r="3.5" fill="#fff" stroke="#666" stroke-width="1"/><path d="M190,5 h4" stroke="#666"/><rect x="194" y="7" width="7" height="8" rx="2" fill="#f0c070" stroke="#666" stroke-width="0.8"/>
<g transform="translate(255,2)"><use href="#i-android"/></g>
<rect x="399" y="2" width="10" height="12" fill="#5a9ad0"/><circle cx="406" cy="11" r="5" fill="#3aa64a"/><path d="M406,11 V6 A5,5 0 0 1 411,11 Z" fill="#f0a030"/>
<rect x="534.5" y="2.5" width="10" height="11" fill="#b8b8b8" stroke="#777" stroke-width="1"/><path d="M537,7 l2,1.5 l-2,1.5" stroke="#fff" fill="none"/>
<rect x="616.5" y="2.5" width="10" height="11" fill="#f8e8c0" stroke="#e0a040" stroke-width="1"/><path d="M618.5,6 h6 M618.5,8.5 h2 M622,8.5 h2.5 M618.5,11 h2 M622,11 h2.5" stroke="#e0a040" stroke-width="1"/>
<circle cx="1709" cy="12" r="6.5" fill="none" stroke="#888" stroke-width="1"/>
<rect x="1795.5" y="4.5" width="10" height="10" fill="#dde8f4" stroke="#777" stroke-width="1"/><rect x="1795" y="4" width="10" height="2" fill="#5a9ad0"/><path d="M1797,8.5 h5 M1797,11 h5" stroke="#555" stroke-width="1"/>
</svg>
</body></html>
